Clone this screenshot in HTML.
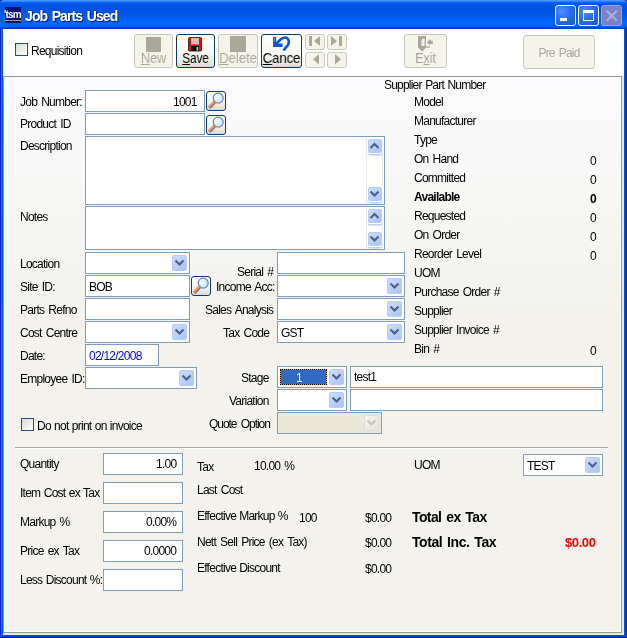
<!DOCTYPE html>
<html><head><meta charset="utf-8">
<style>
*{box-sizing:border-box;margin:0;padding:0}
html,body{width:627px;height:638px;overflow:hidden;background:#0a2a8a}
body{position:relative;font-family:"Liberation Sans",sans-serif;font-size:12px;letter-spacing:-0.75px;word-spacing:1.5px;color:#000}
.a{position:absolute}
#win{position:absolute;left:0;top:0;width:627px;height:638px;background:#0050e6;border-radius:4px 4px 0 0;overflow:hidden}
#title{position:absolute;left:0;top:0;width:627px;height:29px;
 background:linear-gradient(to bottom,#4a9cff 0px,#3d8ffb 1px,#0a62f2 2.5px,#0055e6 4px,#0053e2 9px,#0056e6 14px,#0062f6 20px,#006bff 25px,#0058ea 27px,#0040d2 28px,#0036c8 29px)}
#lb{position:absolute;left:0;top:29px;width:3px;height:609px;background:linear-gradient(to right,#0724d8 0,#0724d8 1px,#1a6cff 1px,#1a6cff 2px,#0052e4 2px)}
#rb{position:absolute;left:624px;top:29px;width:3px;height:609px;background:linear-gradient(to right,#0052e4 0,#0052e4 1px,#0a40d8 1px,#0a40d8 2px,#001ea8 2px)}
#bb{position:absolute;left:0;top:635px;width:627px;height:3px;background:linear-gradient(to bottom,#0050e2 0,#0050e2 1px,#0040d0 1px,#0040d0 2px,#001a9c 2px)}
#tool{position:absolute;left:3px;top:29px;width:621px;height:47px;background:#fff}
#beige{position:absolute;left:3px;top:76px;width:621px;height:559px;background:#ece9d8}
#panel{position:absolute;left:3px;top:76px;width:619px;height:557px;border:1px solid #8f9b95;background:#fff}
#pin{position:absolute;left:1px;top:1px;width:615px;height:553px;background:linear-gradient(to bottom,#fbfbfd 0px,#f9f9fa 60px,#f6f6f3 140px,#f3f2ed 240px,#f3f2ed 553px)}
.t{position:absolute;line-height:13px;white-space:pre;will-change:transform}
#txtl{position:absolute;left:0;top:0;width:627px;height:638px;will-change:transform}
.f{position:absolute;border:1px solid #7f9db9;background:#fff;height:22px}
.dd{position:absolute;width:15px;height:16px;border-radius:2px;background:linear-gradient(135deg,#cddcfd 0%,#bcd0fb 50%,#a9c4f7 100%);border:1px solid #b8cbf6}
.dd svg{position:absolute;left:1px;top:3px}
.dd.dis{background:linear-gradient(135deg,#f4f3ee,#e8e6dc);border-color:#e0ded2}
.mag{position:absolute;width:20px;height:20px;border:1px solid #0c3a78;border-radius:3px;background:linear-gradient(to bottom,#fff 0%,#f3f3ef 60%,#dcdad0 100%)}
.mag svg{position:absolute;left:-1px;top:-1px}
.btn{position:absolute;border-radius:3px;height:34px}
.btn.en{border:1px solid #003c74;background:linear-gradient(to bottom,#fff 0%,#f6f6f3 55%,#e6e5de 90%,#d8d6cc 100%)}
.btn.dis{border:1px solid #cac8bb;background:#f5f4ea}
.cb{position:absolute;width:13px;height:13px;border:1px solid #1c5180;background:linear-gradient(135deg,#dcdcd6 0%,#f0f0ea 60%,#fff 100%)}
.sb{position:absolute;width:17px;border-left:1px solid #efeee6;background:#fdfdfa}
.wb{position:absolute;width:21px;height:21px;border:1px solid #fff;border-radius:3px;background:radial-gradient(circle at 30% 30%,#4d8dff 0%,#2a6af5 50%,#1a55e0 100%)}
.wb.dis{border-color:#9ca4e4;background:#7a82c6}
u{text-decoration:underline;text-underline-offset:1px}
.sbt{box-shadow:0 0 0 1px #fff,0 2px 0 0.5px #c0d0f0}
.sbt svg{left:0;top:2px}
.sb{width:17px;border-left:1px solid #eeede5;border-right:1px solid #eeede5;background:#fdfdfb}
</style></head><body>
<div id="win">
 <div id="title"></div>
 <div id="lb"></div><div id="rb"></div><div id="bb"></div>
 <div id="tool"></div>
 <div id="beige"></div>
 <div id="panel"><div id="pin"></div></div>
</div>

<div class="a" style="left:5px;top:7px;width:16px;height:16px;background:#000c7a"></div>
<div class="a" style="left:5px;top:20px;width:16px;height:1px;background:#a89c80"></div>
<div class="t" style="left:4px;top:9px;color:#fff;font-size:10px;font-weight:bold;letter-spacing:-0.8px;line-height:12px">'tsm</div>
<div class="t" style="left:26px;top:10px;color:#0a1a70;font-size:14px;font-weight:bold;letter-spacing:-0.9px;line-height:15px">Job Parts Used</div>
<div class="t" style="left:25px;top:9px;color:#fff;font-size:14px;font-weight:bold;letter-spacing:-0.9px;line-height:15px">Job Parts Used</div>
<div class="wb" style="left:555px;top:5px"><div class="a" style="left:4px;top:12px;width:7px;height:3px;background:#fff"></div></div>
<div class="wb" style="left:578px;top:5px"><div class="a" style="left:4px;top:4px;width:11px;height:11px;border:1px solid #fff;border-top-width:3px"></div></div>
<div class="wb dis" style="left:601px;top:5px"><svg class="a" style="left:0;top:0" width="21" height="21"><path d="M4.8 4.8 L14.8 14.8 M14.8 4.8 L4.8 14.8" stroke="#a9aee0" stroke-width="2.2"/></svg></div>
<div class="cb" style="left:15px;top:43px"></div>
<div class="t " style="top:45px;left:31px;">Requisition</div>
<div class="btn dis" style="left:134px;top:34px;width:39px"><div class="a" style="left:11px;top:2px;width:15px;height:15px;background:#aca899"></div></div>
<div class="t" style="left:134px;top:50px;width:39px;text-align:center;font-size:14px;line-height:17px;letter-spacing:-0.1px;color:#aca899;transform:scaleX(0.92)"><u>N</u>ew</div>
<div class="btn en" style="left:176px;top:34px;width:39px"><svg class="a" style="left:11px;top:2px" width="15" height="15" viewBox="0 0 15 15"><rect x="0.5" y="0.5" width="13" height="13.5" rx="1" fill="#f00" stroke="#333" stroke-width="1"/><rect x="3" y="1" width="8" height="6.5" fill="#c4c4c4"/><rect x="3" y="9" width="8" height="5" fill="#000"/><rect x="8.5" y="10" width="1.8" height="3.5" fill="#ccc"/></svg></div>
<div class="t" style="left:176px;top:50px;width:39px;text-align:center;font-size:14px;line-height:17px;letter-spacing:-0.1px;color:#000;transform:scaleX(0.84)"><u>S</u>ave</div>
<div class="btn dis" style="left:218px;top:34px;width:40px"><div class="a" style="left:11px;top:1px;width:16px;height:16px;background:#aca899"></div></div>
<div class="t" style="left:218px;top:50px;width:40px;text-align:center;font-size:14px;line-height:17px;letter-spacing:-0.1px;color:#aca899;transform:scaleX(0.95)"><u>D</u>elete</div>
<div class="btn en" style="left:261px;top:34px;width:41px"><svg class="a" style="left:10px;top:1px" width="20" height="16" viewBox="0 0 20 16"><path d="M3.5 8.5 L8.5 3.5 Q12 0.6 15 2 Q17.8 4 16.2 8.5 L11.5 14.5" fill="none" stroke="#0a55dd" stroke-width="2.6"/><path d="M1 1 H4.2 V7.6 H10.5 V11 H1 Z" fill="#0a55dd"/><rect x="1.8" y="2" width="1.3" height="4" fill="#4a9aff"/></svg></div>
<div class="t" style="left:261px;top:50px;width:41px;text-align:center;font-size:14px;line-height:17px;letter-spacing:-0.1px;color:#000;transform:scaleX(0.94)"><u>C</u>ance</div>
<div class="btn dis" style="left:305px;top:34px;width:20px;height:16px;border-radius:3px"><svg class="a" style="left:0;top:0" width="20" height="16" viewBox="0 0 20 16"><rect x="3" y="1" width="3" height="10" fill="#aca899"/><path d="M8 6 L14 1 L14 11 Z" fill="#aca899"/></svg></div>
<div class="btn dis" style="left:327px;top:34px;width:20px;height:16px;border-radius:3px"><svg class="a" style="left:0;top:0" width="20" height="16" viewBox="0 0 20 16"><rect x="11" y="1" width="3" height="10" fill="#aca899"/><path d="M3 1 L9 6 L3 11 Z" fill="#aca899"/></svg></div>
<div class="btn dis" style="left:305px;top:52px;width:20px;height:16px;border-radius:3px"><svg class="a" style="left:0;top:0" width="20" height="16" viewBox="0 0 20 16"><path d="M7 6.2 L13 1 L13 11.4 Z" fill="#aca899"/></svg></div>
<div class="btn dis" style="left:327px;top:52px;width:20px;height:16px;border-radius:3px"><svg class="a" style="left:0;top:0" width="20" height="16" viewBox="0 0 20 16"><path d="M7 1 L13 6.2 L7 11.4 Z" fill="#aca899"/></svg></div>
<div class="btn dis" style="left:404px;top:34px;width:43px"><svg class="a" style="left:12px;top:1px" width="20" height="17" viewBox="0 0 20 17"><path d="M1 0 H9 V10.5 H13 V11.8 H9 L5.2 15.5 L1 11.5 Z" fill="#aca899"/><path d="M4.5 4 L6 2.8 H7.6 V10 H4.5 V5.5 Z" fill="#f5f4ea"/><path d="M10 6.2 L13.2 3 V9.4 Z" fill="#aca899"/><rect x="13" y="4.6" width="2.8" height="3.4" fill="#aca899"/></svg></div>
<div class="t" style="left:404px;top:50px;width:43px;text-align:center;font-size:14px;line-height:17px;letter-spacing:-0.1px;color:#aca899;transform:scaleX(0.9)">E<u>x</u>it</div>
<div class="btn dis" style="left:523px;top:35px;width:72px;height:34px"></div>
<div class="t" style="left:523px;top:47px;width:72px;text-align:center;color:#aca899;font-size:12px;letter-spacing:-0.8px">Pre Paid</div>
<div class="t " style="top:96px;left:20px;">Job Number:</div>
<div class="f" style="left:85px;top:90px;width:120px;height:22px;"></div>
<div class="t " style="top:96px;right:430px;">1001</div>
<div class="mag" style="left:206px;top:91px"><svg width="20" height="20" viewBox="0 0 20 20"><line x1="3.2" y1="16.8" x2="8.6" y2="11.4" stroke="#7a78a8" stroke-width="3.4"/><line x1="2.6" y1="16.1" x2="8" y2="10.7" stroke="#ff9a3c" stroke-width="1.9"/><circle cx="12.2" cy="7.1" r="5" fill="#c8eeff" stroke="#7c7aa8" stroke-width="1.2"/><circle cx="11.4" cy="6.2" r="3" fill="#e6f8ff"/></svg></div>
<div class="t " style="top:118px;left:20px;">Product ID</div>
<div class="f" style="left:85px;top:113px;width:120px;height:22px;"></div>
<div class="mag" style="left:206px;top:115px"><svg width="20" height="20" viewBox="0 0 20 20"><line x1="3.2" y1="16.8" x2="8.6" y2="11.4" stroke="#7a78a8" stroke-width="3.4"/><line x1="2.6" y1="16.1" x2="8" y2="10.7" stroke="#ff9a3c" stroke-width="1.9"/><circle cx="12.2" cy="7.1" r="5" fill="#c8eeff" stroke="#7c7aa8" stroke-width="1.2"/><circle cx="11.4" cy="6.2" r="3" fill="#e6f8ff"/></svg></div>
<div class="t " style="top:140px;left:20px;">Description</div>
<div class="f" style="left:85px;top:136px;width:300px;height:69px;"></div>
<div class="sb" style="left:366px;top:138px;height:65px"></div>
<div class="dd sbt" style="left:368px;top:139px;width:14px;height:14px"><svg width="11" height="8" viewBox="0 0 11 8"><path d="M1.5 6 L5.5 2 L9.5 6" fill="none" stroke="#4d6185" stroke-width="2.2"/></svg></div>
<div class="dd sbt" style="left:368px;top:187px;width:14px;height:14px"><svg width="11" height="8" viewBox="0 0 11 8"><path d="M1.5 1.5 L5.5 5.5 L9.5 1.5" fill="none" stroke="#4d6185" stroke-width="2.2"/></svg></div>
<div class="t " style="top:211px;left:20px;">Notes</div>
<div class="f" style="left:85px;top:206px;width:300px;height:44px;"></div>
<div class="sb" style="left:366px;top:208px;height:40px"></div>
<div class="dd sbt" style="left:368px;top:209px;width:14px;height:14px"><svg width="11" height="8" viewBox="0 0 11 8"><path d="M1.5 6 L5.5 2 L9.5 6" fill="none" stroke="#4d6185" stroke-width="2.2"/></svg></div>
<div class="dd sbt" style="left:368px;top:232px;width:14px;height:14px"><svg width="11" height="8" viewBox="0 0 11 8"><path d="M1.5 1.5 L5.5 5.5 L9.5 1.5" fill="none" stroke="#4d6185" stroke-width="2.2"/></svg></div>
<div class="t " style="top:258px;left:20px;">Location</div>
<div class="f" style="left:85px;top:252px;width:105px;height:22px;"></div>
<div class="dd" style="left:172px;top:255px;width:15px;height:16px"><svg width="11" height="8" viewBox="0 0 11 8"><path d="M1.5 1.5 L5.5 5.5 L9.5 1.5" fill="none" stroke="#4d6185" stroke-width="2.2"/></svg></div>
<div class="t " style="top:281px;left:20px;">Site ID:</div>
<div class="f" style="left:85px;top:275px;width:105px;height:22px;"></div>
<div class="t " style="top:281px;left:89px;">BOB</div>
<div class="mag" style="left:191px;top:276px"><svg width="20" height="20" viewBox="0 0 20 20"><line x1="3.2" y1="16.8" x2="8.6" y2="11.4" stroke="#7a78a8" stroke-width="3.4"/><line x1="2.6" y1="16.1" x2="8" y2="10.7" stroke="#ff9a3c" stroke-width="1.9"/><circle cx="12.2" cy="7.1" r="5" fill="#c8eeff" stroke="#7c7aa8" stroke-width="1.2"/><circle cx="11.4" cy="6.2" r="3" fill="#e6f8ff"/></svg></div>
<div class="t " style="top:304px;left:20px;">Parts Refno</div>
<div class="f" style="left:85px;top:298px;width:105px;height:22px;"></div>
<div class="t " style="top:327px;left:20px;">Cost Centre</div>
<div class="f" style="left:85px;top:321px;width:105px;height:22px;"></div>
<div class="dd" style="left:172px;top:324px;width:15px;height:16px"><svg width="11" height="8" viewBox="0 0 11 8"><path d="M1.5 1.5 L5.5 5.5 L9.5 1.5" fill="none" stroke="#4d6185" stroke-width="2.2"/></svg></div>
<div class="t " style="top:350px;left:20px;">Date:</div>
<div class="f" style="left:85px;top:344px;width:74px;height:22px;"></div>
<div class="t " style="top:350px;left:89px;color:#0000ff">02/12/2008</div>
<div class="t " style="top:373px;left:20px;">Employee ID:</div>
<div class="f" style="left:85px;top:367px;width:112px;height:22px;"></div>
<div class="dd" style="left:179px;top:370px;width:15px;height:16px"><svg width="11" height="8" viewBox="0 0 11 8"><path d="M1.5 1.5 L5.5 5.5 L9.5 1.5" fill="none" stroke="#4d6185" stroke-width="2.2"/></svg></div>
<div class="cb" style="left:21px;top:418px"></div>
<div class="t " style="top:420px;left:37px;word-spacing:0.7px">Do not print on invoice</div>
<div class="t " style="top:266px;right:354px;">Serial #</div>
<div class="f" style="left:277px;top:252px;width:128px;height:22px;"></div>
<div class="t " style="top:281px;right:352.5px;">Income Acc:</div>
<div class="f" style="left:277px;top:275px;width:128px;height:22px;"></div>
<div class="dd" style="left:387px;top:278px;width:15px;height:16px"><svg width="11" height="8" viewBox="0 0 11 8"><path d="M1.5 1.5 L5.5 5.5 L9.5 1.5" fill="none" stroke="#4d6185" stroke-width="2.2"/></svg></div>
<div class="t " style="top:304px;right:354px;">Sales Analysis</div>
<div class="f" style="left:277px;top:298px;width:128px;height:22px;"></div>
<div class="dd" style="left:387px;top:301px;width:15px;height:16px"><svg width="11" height="8" viewBox="0 0 11 8"><path d="M1.5 1.5 L5.5 5.5 L9.5 1.5" fill="none" stroke="#4d6185" stroke-width="2.2"/></svg></div>
<div class="t " style="top:327px;right:358px;">Tax Code</div>
<div class="f" style="left:277px;top:321px;width:128px;height:22px;"></div>
<div class="dd" style="left:387px;top:324px;width:15px;height:16px"><svg width="11" height="8" viewBox="0 0 11 8"><path d="M1.5 1.5 L5.5 5.5 L9.5 1.5" fill="none" stroke="#4d6185" stroke-width="2.2"/></svg></div>
<div class="t " style="top:327px;left:281px;">GST</div>
<div class="t " style="top:372px;right:358px;">Stage</div>
<div class="f" style="left:277px;top:366px;width:70px;height:22px;"></div>
<div class="a" style="left:280px;top:369px;width:47px;height:16px;background:#f0a030;border:1px dotted #000"><div class="a" style="left:0;top:0;width:45px;height:14px;background:#316ac5"></div></div>
<div class="t" style="left:296px;top:372px;color:#fff">1</div>
<div class="dd" style="left:329px;top:369px;width:15px;height:16px"><svg width="11" height="8" viewBox="0 0 11 8"><path d="M1.5 1.5 L5.5 5.5 L9.5 1.5" fill="none" stroke="#4d6185" stroke-width="2.2"/></svg></div>
<div class="f" style="left:350px;top:366px;width:253px;height:22px;"></div>
<div class="t " style="top:371px;left:354px;">test1</div>
<div class="t " style="top:395px;right:358px;">Variation</div>
<div class="f" style="left:277px;top:389px;width:70px;height:22px;"></div>
<div class="dd" style="left:329px;top:392px;width:15px;height:16px"><svg width="11" height="8" viewBox="0 0 11 8"><path d="M1.5 1.5 L5.5 5.5 L9.5 1.5" fill="none" stroke="#4d6185" stroke-width="2.2"/></svg></div>
<div class="f" style="left:350px;top:389px;width:253px;height:22px;"></div>
<div class="t " style="top:418px;right:357.5px;word-spacing:2px;letter-spacing:-1.05px">Quote Option</div>
<div class="f" style="left:277px;top:412px;width:105px;height:22px;background:#ebe8d8"></div>
<div class="dd dis" style="left:364px;top:415px;width:15px;height:16px"><svg width="11" height="8" viewBox="0 0 11 8"><path d="M1.5 1.5 L5.5 5.5 L9.5 1.5" fill="none" stroke="#c9c7ba" stroke-width="2.2"/></svg></div>
<div class="t " style="top:79px;left:383.5px;word-spacing:1px;letter-spacing:-0.8px">Supplier Part Number</div>
<div class="t " style="top:96px;left:414px;">Model</div>
<div class="t " style="top:115px;left:414px;">Manufacturer</div>
<div class="t " style="top:134px;left:414px;">Type</div>
<div class="t " style="top:153px;left:414px;">On Hand</div>
<div class="t " style="top:154.5px;right:31px;">0</div>
<div class="t " style="top:172px;left:414px;">Committed</div>
<div class="t " style="top:173.5px;right:31px;">0</div>
<div class="t " style="top:191px;left:414px;font-weight:bold;">Available</div>
<div class="t " style="top:192.5px;right:31px;font-weight:bold;">0</div>
<div class="t " style="top:210px;left:414px;">Requested</div>
<div class="t " style="top:211.5px;right:31px;">0</div>
<div class="t " style="top:229px;left:414px;">On Order</div>
<div class="t " style="top:230.5px;right:31px;">0</div>
<div class="t " style="top:248px;left:414px;">Reorder Level</div>
<div class="t " style="top:249.5px;right:31px;">0</div>
<div class="t " style="top:267px;left:414px;">UOM</div>
<div class="t " style="top:286px;left:414px;">Purchase Order #</div>
<div class="t " style="top:305px;left:414px;">Supplier</div>
<div class="t " style="top:324px;left:414px;">Supplier Invoice #</div>
<div class="t " style="top:343px;left:414px;">Bin #</div>
<div class="t " style="top:344.5px;right:31px;">0</div>
<div class="a" style="left:15px;top:447px;width:593px;height:1px;background:#aca899"></div>
<div class="a" style="left:15px;top:448px;width:594px;height:1px;background:#fff"></div>
<div class="t " style="top:458px;left:20px;">Quantity</div>
<div class="f" style="left:103px;top:453px;width:80px;height:22px;"></div>
<div class="t " style="top:458px;right:451px;">1.00</div>
<div class="t " style="top:487px;left:20px;word-spacing:0.8px">Item Cost ex Tax</div>
<div class="f" style="left:103px;top:482px;width:80px;height:22px;"></div>
<div class="t " style="top:516px;left:20px;">Markup %</div>
<div class="f" style="left:103px;top:511px;width:80px;height:22px;"></div>
<div class="t " style="top:516px;right:451px;">0.00%</div>
<div class="t " style="top:545px;left:20px;">Price ex Tax</div>
<div class="f" style="left:103px;top:540px;width:80px;height:22px;"></div>
<div class="t " style="top:545px;right:451px;">0.0000</div>
<div class="t " style="top:574px;left:20px;word-spacing:0.8px">Less Discount %:</div>
<div class="f" style="left:103px;top:569px;width:80px;height:22px;"></div>
<div class="t " style="top:460.5px;left:197px;">Tax</div>
<div class="t " style="top:460px;left:254px;">10.00 %</div>
<div class="t " style="top:484px;left:197px;">Last Cost</div>
<div class="t " style="top:510px;left:197px;word-spacing:0.5px">Effective Markup %</div>
<div class="t " style="top:512px;left:299px;">100</div>
<div class="t " style="top:512px;right:236px;">$0.00</div>
<div class="t " style="top:536px;left:197px;">Nett Sell Price (ex Tax)</div>
<div class="t " style="top:537px;right:236px;">$0.00</div>
<div class="t " style="top:562px;left:197px;word-spacing:0.5px">Effective Discount</div>
<div class="t " style="top:563px;right:236px;">$0.00</div>
<div class="t " style="top:459px;left:414px;">UOM</div>
<div class="f" style="left:523px;top:454px;width:80px;height:22px;"></div>
<div class="dd" style="left:585px;top:457px;width:15px;height:16px"><svg width="11" height="8" viewBox="0 0 11 8"><path d="M1.5 1.5 L5.5 5.5 L9.5 1.5" fill="none" stroke="#4d6185" stroke-width="2.2"/></svg></div>
<div class="t " style="top:460px;left:527px;">TEST</div>
<div class="t " style="top:510px;left:412px;font-weight:bold;font-size:14px;line-height:15px;letter-spacing:-0.4px;letter-spacing:-0.6px">Total ex Tax</div>
<div class="t " style="top:535px;left:412px;font-weight:bold;font-size:14px;line-height:15px;letter-spacing:-0.4px;letter-spacing:-0.45px">Total Inc. Tax</div>
<div class="t " style="top:535px;right:31px;font-weight:bold;font-size:13px;line-height:15px;letter-spacing:-0.4px;color:#f00">$0.00</div>
</body></html>
